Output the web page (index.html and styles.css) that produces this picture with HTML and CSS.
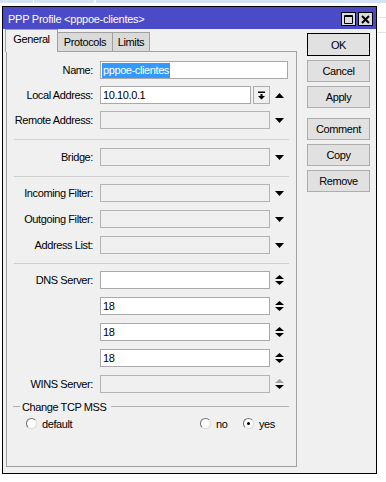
FILE: index.html
```html
<!DOCTYPE html>
<html lang="en">
<head>
  <meta charset="UTF-8" />
  <title>PPP Profile &lt;pppoe-clientes&gt;</title>
  <link rel="stylesheet" href="styles.css">
</head>
<body>

  <!-- list that sits behind the window -->
  <div class="strip"><span></span><span></span><span></span></div>

  <div class="desk">
    <div class="dialog">
      <div class="titlebar">
        <span class="title">PPP Profile &lt;pppoe-clientes&gt;</span>
        <span class="tbtn">
          <svg width="9" height="9" viewBox="0 0 9 9"><path d="M0.5 0.5h8v8h-8z M0.5 1.5h8" fill="none" stroke="#000" stroke-width="1"/></svg>
        </span>
        <span class="tbtn">
          <svg width="9" height="9" viewBox="0 0 9 9"><path d="M1 1l7 7M8 1l-7 7" stroke="#000" stroke-width="2"/></svg>
        </span>
      </div>

      <div class="main">
        <div class="left">
          <div class="tabs">
            <div class="tab active">General</div>
            <div class="tab t-proto">Protocols</div>
            <div class="tab t-limits">Limits</div>
          </div>

          <div class="panel">
            <div class="row">
              <span class="lbl">Name:</span>
              <div class="field"><div class="inp"><span class="sel">pppoe-clientes</span></div></div>
            </div>
            <div class="row tight">
              <span class="lbl">Local Address:</span>
              <div class="field">
                <div class="inp">10.10.0.1</div>
                <span class="sbtn">
                  <svg width="9" height="9" viewBox="0 0 9 9"><path d="M1 0.5h7v1.5H1z M3.5 3h2v2h2.5L4.5 8.5 1 5h2.5z" fill="#000"/></svg>
                </span>
                <span class="arr"><svg width="9" height="5" viewBox="0 0 9 5"><path d="M0 5h9L4.5 0z" fill="#000"/></svg></span>
              </div>
            </div>
            <div class="row tight">
              <span class="lbl">Remote Address:</span>
              <div class="field">
                <div class="inp off"></div>
                <span class="arr"><svg width="9" height="5" viewBox="0 0 9 5"><path d="M0 0h9L4.5 5z" fill="#000"/></svg></span>
              </div>
            </div>

            <div class="sep s1"></div>

            <div class="row first">
              <span class="lbl">Bridge:</span>
              <div class="field">
                <div class="inp off"></div>
                <span class="arr"><svg width="9" height="5" viewBox="0 0 9 5"><path d="M0 0h9L4.5 5z" fill="#000"/></svg></span>
              </div>
            </div>

            <div class="sep s2"></div>

            <div class="row first">
              <span class="lbl">Incoming Filter:</span>
              <div class="field">
                <div class="inp off"></div>
                <span class="arr"><svg width="9" height="5" viewBox="0 0 9 5"><path d="M0 0h9L4.5 5z" fill="#000"/></svg></span>
              </div>
            </div>
            <div class="row">
              <span class="lbl">Outgoing Filter:</span>
              <div class="field">
                <div class="inp off"></div>
                <span class="arr"><svg width="9" height="5" viewBox="0 0 9 5"><path d="M0 0h9L4.5 5z" fill="#000"/></svg></span>
              </div>
            </div>
            <div class="row">
              <span class="lbl">Address List:</span>
              <div class="field">
                <div class="inp off"></div>
                <span class="arr"><svg width="9" height="5" viewBox="0 0 9 5"><path d="M0 0h9L4.5 5z" fill="#000"/></svg></span>
              </div>
            </div>

            <div class="sep s3"></div>

            <div class="row first">
              <span class="lbl">DNS Server:</span>
              <div class="field">
                <div class="inp"></div>
                <span class="arr"><svg width="9" height="10" viewBox="0 0 9 10"><path d="M0 4h9L4.5 0z M0 6h9L4.5 10z" fill="#000"/></svg></span>
              </div>
            </div>
            <div class="row">
              <span class="lbl"></span>
              <div class="field">
                <div class="inp">18</div>
                <span class="arr"><svg width="9" height="10" viewBox="0 0 9 10"><path d="M0 4h9L4.5 0z M0 6h9L4.5 10z" fill="#000"/></svg></span>
              </div>
            </div>
            <div class="row">
              <span class="lbl"></span>
              <div class="field">
                <div class="inp">18</div>
                <span class="arr"><svg width="9" height="10" viewBox="0 0 9 10"><path d="M0 4h9L4.5 0z M0 6h9L4.5 10z" fill="#000"/></svg></span>
              </div>
            </div>
            <div class="row">
              <span class="lbl"></span>
              <div class="field">
                <div class="inp">18</div>
                <span class="arr"><svg width="9" height="10" viewBox="0 0 9 10"><path d="M0 4h9L4.5 0z M0 6h9L4.5 10z" fill="#000"/></svg></span>
              </div>
            </div>
            <div class="row">
              <span class="lbl">WINS Server:</span>
              <div class="field">
                <div class="inp off"></div>
                <span class="arr"><svg width="9" height="10" viewBox="0 0 9 10"><path d="M0 4h9L4.5 0z" fill="#a0a0a0"/><path d="M0 6h9L4.5 10z" fill="#000"/></svg></span>
              </div>
            </div>

            <div class="grp">Change TCP MSS</div>
            <div class="radios">
              <label class="opt"><span class="radio"></span>default</label>
              <label class="opt"><span class="radio"></span>no</label>
              <label class="opt"><span class="radio on"></span>yes</label>
            </div>
          </div>
        </div>

        <div class="actions">
          <div class="btn def">OK</div>
          <div class="btn">Cancel</div>
          <div class="btn">Apply</div>
          <div class="btn spaced">Comment</div>
          <div class="btn">Copy</div>
          <div class="btn">Remove</div>
        </div>
      </div>
    </div>

    <div class="behind"><i></i><i></i></div>
  </div>

</body>
</html>
```

FILE: styles.css
```css
* {
  box-sizing: border-box;
}

body {
  margin: 0;
  background: #fff;
  font-family: "Liberation Sans", Arial, sans-serif;
  font-size: 11px;
  letter-spacing: -0.4px;
  color: #000;
}

/* the grid behind the window */
.strip {
  height: 3px;
  display: flex;
  background: #d5e4f4;
}

.strip span {
  border-right: 1px solid #fff;
}

.strip span:nth-child(1) { width: 34px; }
.strip span:nth-child(2) { width: 61px; }

.desk {
  display: flex;
  margin-top: 3px;
  padding-left: 2px;
}

.behind {
  flex: 1;
  margin-left: 1px;
}

.behind i {
  display: block;
  height: 1px;
  background: #e2e2e2;
  margin-top: 11px;
}

.behind i + i {
  margin-top: 14px;
}

/* window */
.dialog {
  width: 375px;
  height: 468px;
  border: 1px solid #000;
  background: #f0f0f0;
  display: flex;
  flex-direction: column;
}

.titlebar {
  height: 22px;
  background: #4b4bc8;
  color: #fff;
  display: flex;
  align-items: center;
  gap: 2px;
  padding: 2px 3px 0 5px;
}

.title {
  flex: 1;
  letter-spacing: -0.25px;
}

.tbtn {
  width: 15px;
  height: 14px;
  background: #dcdcdc;
  border: 1px solid #000;
  display: flex;
  align-items: center;
  justify-content: center;
}

.main {
  flex: 1;
  display: flex;
}

.left {
  width: 294px;
  padding-left: 2px;
}

/* tabs */
.tabs {
  height: 22px;
  display: flex;
  align-items: flex-end;
}

.tab {
  height: 19px;
  padding-top: 3px;
  text-align: center;
  background: #dadada;
  border-top: 1px solid #a0a0a0;
  border-right: 1px solid #a0a0a0;
}

.tab.active {
  position: relative;
  z-index: 1;
  width: 53px;
  height: 23px;
  margin-bottom: -1px;
  padding-top: 3px;
  background: #f0f0f0;
  border-left: 1px solid #a0a0a0;
}

.t-proto { width: 55px; }
.t-limits { width: 37px; }

.panel {
  margin-left: 1px;
  width: 291px;
  height: 416px;
  border: 1px solid #a0a0a0;
  padding-top: 9px;
}

/* form rows */
.row {
  display: grid;
  grid-template-columns: 86px 188px;
  column-gap: 7px;
  height: 18px;
  margin-top: 8px;
  align-items: center;
}

.row:first-child,
.row.first {
  margin-top: 0;
}

.row.tight {
  margin-top: 7px;
}

.lbl {
  text-align: right;
}

.field {
  display: flex;
  height: 18px;
}

.inp {
  flex: 1;
  display: flex;
  align-items: center;
  padding-left: 2px;
  background: #fff;
  border: 1px solid #a9a9a9;
  white-space: nowrap;
  overflow: hidden;
}

.inp.off {
  background: #f0f0f0;
  border-color: #b4b4b4;
}

.sel {
  height: 15px;
  line-height: 15px;
  margin-left: -1px;
  padding: 0 1px;
  background: #3399ff;
  color: #fff;
}

.sbtn {
  width: 17px;
  margin-left: 2px;
  border: 1px solid #adadad;
  background: #f0f0f0;
  display: flex;
  align-items: center;
  justify-content: center;
}

.arr {
  width: 18px;
  display: flex;
  align-items: center;
  justify-content: center;
}

.sep {
  width: 275px;
  height: 1px;
  margin-left: 7px;
  background: #d0d0d0;
}

.s1 { margin-top: 10px; margin-bottom: 8px; }
.s2 { margin-top: 10px; margin-bottom: 7px; }
.s3 { margin-top: 9px; margin-bottom: 7px; }

/* Change TCP MSS group */
.grp {
  width: 276px;
  height: 13px;
  margin: 7px 0 0 6px;
  display: flex;
  align-items: center;
}

.grp::before {
  content: "";
  width: 7px;
  height: 1px;
  margin-right: 2px;
  background: #b0b0b0;
}

.grp::after {
  content: "";
  flex: 1;
  height: 1px;
  margin-left: 5px;
  background: #b0b0b0;
}

.radios {
  display: grid;
  grid-template-columns: 174px 43px auto;
  height: 13px;
  margin: 4px 0 0 19px;
  align-items: center;
}

.opt {
  display: flex;
  align-items: center;
  gap: 5px;
}

.radio {
  position: relative;
  width: 11px;
  height: 11px;
  border-radius: 50%;
  background: #fff;
  border: 1px solid;
  border-color: #6e6e6e #dadada #dadada #6e6e6e;
}

.radio.on::after {
  content: "";
  position: absolute;
  left: 3px;
  top: 3px;
  width: 3px;
  height: 3px;
  border-radius: 50%;
  background: #000;
}

/* buttons on the right */
.actions {
  width: 63px;
  margin-left: 10px;
  padding-top: 4px;
  display: flex;
  flex-direction: column;
  gap: 4px;
}

.btn {
  height: 22px;
  background: #e1e1e1;
  border: 1px solid #adadad;
  display: flex;
  align-items: center;
  justify-content: center;
}

.btn.def {
  height: 23px;
  border-color: #000;
}

.btn.spaced {
  margin-top: 6px;
}
```
